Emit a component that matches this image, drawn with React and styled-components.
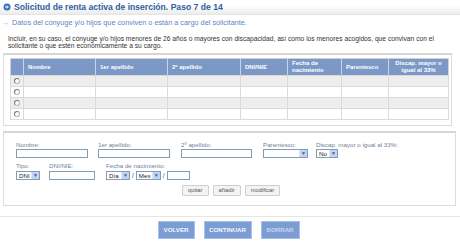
import React from "react";
import styled, { createGlobalStyle } from "styled-components";

const Global = createGlobalStyle`
  html, body { margin: 0; padding: 0; background: #fff; }
  body { font-family: "Liberation Sans", Arial, sans-serif; }
  * { box-sizing: border-box; }
`;

const Page = styled.div`
  width: 460px;
  height: 250px;
  overflow: hidden;
  position: relative;
`;

const TitleBar = styled.div`
  height: 15px;
  display: flex;
  align-items: center;
  gap: 3px;
  padding-left: 3px;
  background: linear-gradient(to bottom, #ffffff 0%, #ffffff 35%, #ececec 100%);
  border-bottom: 1px solid #e4e4e4;
`;

const Title = styled.h1`
  margin: 0;
  font-size: 8.6px;
  font-weight: bold;
  color: #2e5e9f;
  white-space: nowrap;
`;

const Subtitle = styled.div`
  display: flex;
  align-items: center;
  gap: 3px;
  padding: 2px 0 0 2px;
  height: 13px;
  font-size: 7.3px;
  color: #5b86c2;
  white-space: nowrap;
`;

const Arrow = styled.span`
  color: #9aa9bd;
  font-size: 7px;
`;

const Intro = styled.p`
  margin: 7px 0 0 8px;
  font-size: 6.7px;
  line-height: 7.4px;
  color: #333;
  width: 432px;
`;

const Box = styled.div`
  margin: ${(p) => p.$mt}px ${(p) => p.$mr}px 0 3px;
  border: 1px solid #dcdcdc;
  border-top: 2px solid #d6d6d6;
  padding: ${(p) => p.$pad};
  height: ${(p) => p.$h}px;
  background: #fff;
`;

const Table = styled.table`
  border-collapse: collapse;
  table-layout: fixed;
  width: 439px;
  border: 1px solid #d0d0d0;
`;

const Th = styled.th`
  background: #7b98c7;
  color: #fff;
  font-size: 6px;
  font-weight: bold;
  text-align: ${(p) => (p.$center ? "center" : "left")};
  padding: 0 4px;
  height: 17px;
  line-height: 6.6px;
  border-right: 1px solid #c9d4e6;
  vertical-align: middle;
`;

const Td = styled.td`
  height: 11px;
  padding: 0;
  border: 1px solid #dadada;
  background: ${(p) => (p.$alt ? "#eeeeee" : "#ffffff")};
`;

const Radio = styled.span`
  display: block;
  width: 6px;
  height: 6px;
  margin-left: 3px;
  border-radius: 50%;
  border: 1px solid #b9b9b9;
  border-top-color: #777;
  border-left-color: #777;
  background: #fff;
`;

const FormRow = styled.div`
  display: flex;
  align-items: flex-start;
  height: ${(p) => p.$h}px;
`;

const Field = styled.div`
  width: ${(p) => p.$w}px;
  flex: none;
  display: flex;
  flex-direction: column;
  gap: ${(p) => p.$gap ?? 1}px;
`;

const Label = styled.span`
  font-size: 6.2px;
  color: #6f7f95;
  line-height: 7px;
  height: 7px;
  white-space: nowrap;
`;

const Input = styled.div`
  width: ${(p) => p.$w}px;
  height: 9px;
  border: 1px solid #7f9db9;
  background: #fff;
`;

const SelectBox = styled.div`
  width: ${(p) => p.$w}px;
  height: 9px;
  border: 1px solid #7f9db9;
  background: #fff;
  display: flex;
  align-items: stretch;
  justify-content: space-between;
  font-size: 6.2px;
  color: #222;
  line-height: 7px;
  padding-left: 2px;
`;

const DropBtn = styled.span`
  width: 8px;
  background: #c3d3f3;
  border-left: 1px solid #dfe8f8;
  color: #4d6185;
  font-size: 5px;
  display: flex;
  align-items: center;
  justify-content: center;
`;

const Inline = styled.div`
  display: flex;
  align-items: center;
  gap: 2px;
  font-size: 6.5px;
  color: #555;
`;

const SmallBtns = styled.div`
  display: flex;
  gap: 4px;
  padding-left: 166px;
`;

const SmallBtn = styled.button`
  height: 11px;
  padding: 0 5px;
  font-family: inherit;
  font-size: 5.8px;
  color: #555;
  background: #f3f3f3;
  border: 1px solid #cfcfcf;
  border-radius: 1px;
  line-height: 9px;
`;

const Separator = styled.div`
  margin: 10px 0 0 0;
  border-top: 1px solid #e6e6e6;
`;

const Actions = styled.div`
  display: flex;
  justify-content: center;
  gap: 9px;
  padding: 4px 0 0 0;
  margin-left: -3px;
`;

const ActionBtn = styled.button`
  height: 18px;
  width: ${(p) => p.$w}px;
  padding: 0;
  font-family: inherit;
  font-size: 6.2px;
  font-weight: bold;
  color: ${(p) => (p.$disabled ? "#c9d6ef" : "#f4f7fc")};
  background: #7c9dd4;
  border: 1px solid #a9bfe5;
`;

const Select = ({ w, value }) => (
  <SelectBox $w={w}>
    <span>{value}</span>
    <DropBtn>▼</DropBtn>
  </SelectBox>
);

const cols = [13, 72, 72, 73, 47, 54, 47, 60];
const heads = ["", "Nombre", "1er apellido", "2º apellido", "DNI/NIE", "Fecha de nacimiento", "Parentesco", "Discap. mayor o igual al 33%"];

export default function App() {
  return (
    <Page>
      <Global />
      <TitleBar>
        <svg width="8" height="8" viewBox="0 0 8 8">
          <circle cx="4" cy="4" r="3.5" fill="#3a6db3" />
          <path d="M2 4h3.2M3.8 2.5L5.3 4L3.8 5.5" stroke="#fff" strokeWidth="1" fill="none" />
        </svg>
        <Title>Solicitud de renta activa de inserción. Paso 7 de 14</Title>
      </TitleBar>
      <Subtitle>
        <Arrow>→</Arrow>
        <span>Datos del cónyuge y/o hijos que conviven o están a cargo del solicitante.</span>
      </Subtitle>
      <Intro>
        Incluir, en su caso, el cónyuge y/o hijos menores de 26 años o mayores con discapacidad, así como los menores acogidos, que convivan con el solicitante o que estén económicamente a su cargo.
      </Intro>
      <Box $mt={3} $mr={8} $pad="3px 0 0 6px" $h={73}>
        <Table>
          <colgroup>
            {cols.map((c, i) => (
              <col key={i} style={{ width: c }} />
            ))}
          </colgroup>
          <thead>
            <tr>
              {heads.map((h, i) => (
                <Th key={i} $center={i === 7}>{h}</Th>
              ))}
            </tr>
          </thead>
          <tbody>
            {[0, 1, 2, 3].map((r) => (
              <tr key={r}>
                {cols.map((c, i) => (
                  <Td key={i} $alt={r % 2 === 0}>
                    {i === 0 && <Radio />}
                  </Td>
                ))}
              </tr>
            ))}
          </tbody>
        </Table>
      </Box>
      <Box $mt={5} $mr={4} $pad="8px 0 0 12px" $h={75}>
        <FormRow $h={21}>
          <Field $w={82}>
            <Label>Nombre:</Label>
            <Input $w={72} />
          </Field>
          <Field $w={83}>
            <Label>1er apellido:</Label>
            <Input $w={72} />
          </Field>
          <Field $w={82}>
            <Label>2º apellido:</Label>
            <Input $w={71} />
          </Field>
          <Field $w={53}>
            <Label>Parentesco:</Label>
            <Select w={45} value="" />
          </Field>
          <Field $w={120}>
            <Label>Discap. mayor o igual al 33%:</Label>
            <Select w={22} value="No" />
          </Field>
        </FormRow>
        <FormRow $h={23}>
          <Field $w={33} $gap={2}>
            <Label>Tipo:</Label>
            <Select w={24} value="DNI" />
          </Field>
          <Field $w={57} $gap={2}>
            <Label>DNI/NIE:</Label>
            <Input $w={46} />
          </Field>
          <Field $w={120} $gap={2}>
            <Label>Fecha de nacimiento:</Label>
            <Inline>
              <Select w={24} value="Día" />
              <span>/</span>
              <Select w={25} value="Mes" />
              <span>/</span>
              <Input $w={23} />
            </Inline>
          </Field>
        </FormRow>
        <SmallBtns>
          <SmallBtn>quitar</SmallBtn>
          <SmallBtn>añadir</SmallBtn>
          <SmallBtn>modificar</SmallBtn>
        </SmallBtns>
      </Box>
      <Separator />
      <Actions>
        <ActionBtn $w={37}>VOLVER</ActionBtn>
        <ActionBtn $w={48}>CONTINUAR</ActionBtn>
        <ActionBtn $w={39} $disabled>BORRAR</ActionBtn>
      </Actions>
    </Page>
  );
}
